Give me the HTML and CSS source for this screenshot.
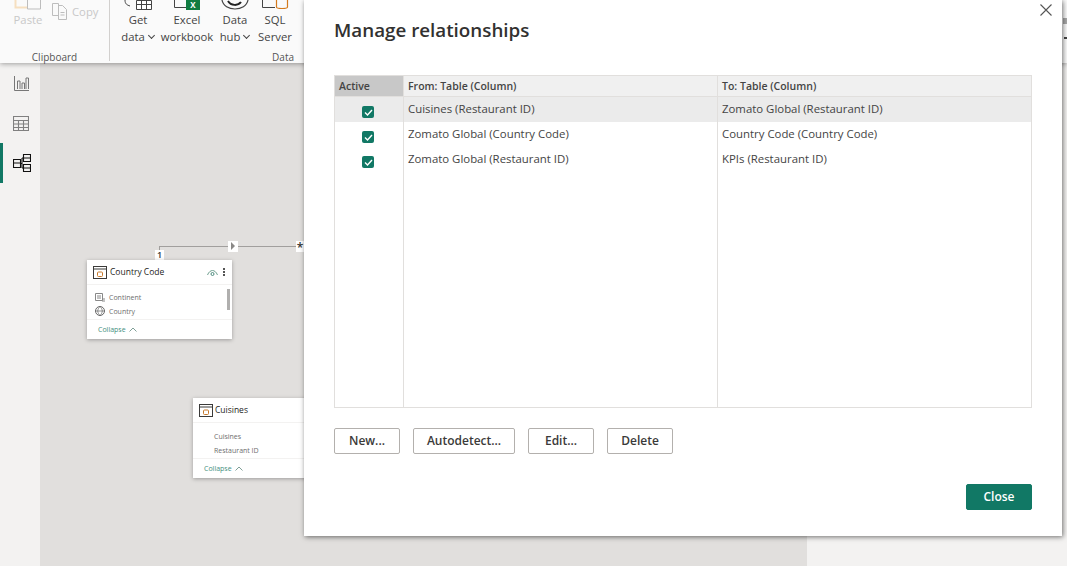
FILE: index.html
```html
<!DOCTYPE html>
<html lang="en">
<head>
    <meta charset="UTF-8">
    <title>Manage relationships</title>
    <link rel="stylesheet" href="styles.css">
</head>
<body>
    <div class="app">
        <div class="ribbon">
            <div class="rib-group clipboard">
                <div class="rib-row">
                    <div class="rib-btn paste disabled">
                        <svg class="rib-icon" width="38" height="10" viewBox="0 0 38 10"><path d="M6.500 0v7.500H19" fill="none" stroke="#f6dfc0" stroke-width="2"/><path d="M18.500 -1h13v10h-13z" fill="none" stroke="#bdbdbd"/></svg>
                        <span>Paste</span>
                    </div>
                    <div class="copy disabled">
                        <svg width="18" height="18" viewBox="0 0 18 18"><path d="M1.500 1.500h6v12h-6zM7.500 3.500h4l4 4v10h-8z" fill="#fafafa" stroke="#bdbdbd"/><path d="M9.500 10.500h4M9.500 13h4" stroke="#bdbdbd"/></svg>
                        <span>Copy</span>
                    </div>
                </div>
                <div class="group-label">Clipboard</div>
            </div>
            <div class="rib-group data">
                <div class="rib-row">
                    <div class="rib-btn get-data">
                        <svg class="rib-icon" width="28" height="10" viewBox="0 0 28 10"><path d="M1 0c0 4 2 5 5 6" fill="none" stroke="#444"/><path d="M12.500 0.500h15v9h-15zM12.500 4.500h15M17.500 0v10M22.500 0v10" fill="#fff" stroke="#444"/></svg>
                        <span>Get</span>
                        <span>data <i class="chev"></i></span>
                    </div>
                    <div class="rib-btn excel">
                        <svg class="rib-icon" width="28" height="10" viewBox="0 0 28 10"><path d="M1.500 0v7.500H13" fill="none" stroke="#444"/><rect x="13" y="0" width="14" height="10" fill="#107c41"/><text class="excel-x" x="20" y="8" text-anchor="middle">X</text></svg>
                        <span>Excel</span>
                        <span>workbook</span>
                    </div>
                    <div class="rib-btn hub">
                        <svg class="rib-icon" width="28" height="10" viewBox="0 0 28 10"><path d="M1 0c2 12 24 12 26 0" fill="none" stroke="#444" stroke-width="1.200"/><path d="M7 1c3 5 10 5 13 1" fill="none" stroke="#222" stroke-width="2"/></svg>
                        <span>Data</span>
                        <span>hub <i class="chev"></i></span>
                    </div>
                    <div class="rib-btn sql">
                        <svg class="rib-icon" width="28" height="10" viewBox="0 0 28 10"><path d="M1.500 0v7.500H14" fill="none" stroke="#444"/><path d="M15.500 0v7c0 2 11 2 11 0V0" fill="none" stroke="#d47a1d" stroke-width="1.200"/></svg>
                        <span>SQL</span>
                        <span>Server</span>
                    </div>
                </div>
                <div class="group-label">Data</div>
            </div>
            <div class="rib-sliver">
                <i class="sliver-mark"></i>
                <i class="sliver-chev"></i>
            </div>
        </div>

        <div class="main">
            <div class="sidebar">
                <div class="nav-item">
                    <svg width="15" height="15" viewBox="0 0 15 15"><path d="M.5 0v14.500H15M3.500 13V5H6v8M8 13V7h2.500v6M12 13V2h2.500v11" fill="none" stroke="#777"/></svg>
                </div>
                <div class="nav-item">
                    <svg width="16" height="15" viewBox="0 0 16 15"><path d="M.5.500h15v14H.5zM.5 4.500h15M.5 8h15M.5 11.500h15M5.500 4.500v10M10.500 4.500v10" fill="none" stroke="#808080" stroke-width="1.100"/></svg>
                </div>
                <div class="nav-item active">
                    <svg width="18" height="18" viewBox="0 0 18 18"><path d="M.5 5.500h7v8h-7zM.5 9h7M10.500.5h7v7h-7zM10.500 4h7M10.500 10.500h7v7h-7zM10.500 14h7M7.500 9.500H9M9 4v10M9 4h1.500M9 14h1.500" fill="none" stroke="#111" stroke-width="1.100"/></svg>
                </div>
            </div>

            <div class="canvas">
                <div class="link-line"></div>
                <div class="link-drop"></div>
                <div class="link-tag one">1</div>
                <div class="link-arrow"><i></i></div>
                <div class="link-tag star">*</div>

                <div class="node country">
                    <div class="node-head">
                        <svg class="tbl-icon" width="14" height="13" viewBox="0 0 14 13"><rect x=".5" y=".5" width="13" height="12" fill="#fff" stroke="#3b3a39"/><path d="M0 3h14" stroke="#3b3a39"/><rect x="4.500" y="6" width="5" height="4.500" rx="1" fill="none" stroke="#c8792b"/></svg>
                        <span class="node-title">Country Code</span>
                        <svg class="eye" width="11" height="7" viewBox="0 0 11 7"><path d="M.5 6C3 0 8 0 10.500 6" fill="none" stroke="#6f9f8f"/><circle cx="5.500" cy="5" r="1.500" fill="none" stroke="#4d8b7e"/></svg>
                        <span class="dots"><i></i><i></i><i></i></span>
                    </div>
                    <div class="node-fields">
                        <div class="field">
                            <svg width="10" height="9" viewBox="0 0 10 9"><path d="M.5.500h7v7h-7zM2 3h4M2 5h4M7 6h3M7 8h3" fill="none" stroke="#888"/></svg>
                            <span>Continent</span>
                        </div>
                        <div class="field">
                            <svg width="10" height="10" viewBox="0 0 10 10"><circle cx="5" cy="5" r="4.500" fill="none" stroke="#666"/><path d="M.5 5h9M5 .5c-3 3-3 6 0 9M5 .5c3 3 3 6 0 9" fill="none" stroke="#666" stroke-width=".7"/></svg>
                            <span>Country</span>
                        </div>
                        <div class="scrollbar"></div>
                    </div>
                    <div class="node-foot">Collapse <svg width="8" height="5" viewBox="0 0 8 5"><path d="M.5 4.500 4 1l3.500 3.500" fill="none" stroke="#7f9f97"/></svg></div>
                </div>

                <div class="node cuisines">
                    <div class="node-head">
                        <svg class="tbl-icon" width="14" height="13" viewBox="0 0 14 13"><rect x=".5" y=".5" width="13" height="12" fill="#fff" stroke="#3b3a39"/><path d="M0 3h14" stroke="#3b3a39"/><rect x="4.500" y="6" width="5" height="4.500" rx="1" fill="none" stroke="#c8792b"/></svg>
                        <span class="node-title">Cuisines</span>
                    </div>
                    <div class="node-fields">
                        <div class="field plain"><span>Cuisines</span></div>
                        <div class="field plain"><span>Restaurant ID</span></div>
                    </div>
                    <div class="node-foot">Collapse <svg width="8" height="5" viewBox="0 0 8 5"><path d="M.5 4.500 4 1l3.500 3.500" fill="none" stroke="#7f9f97"/></svg></div>
                </div>
            </div>

            <div class="right-panel"></div>
        </div>

        <div class="dialog">
            <svg class="dialog-x" width="12" height="12" viewBox="0 0 12 12"><path d="M.5.500l11 11M11.500.500l-11 11" stroke="#555" stroke-width="1.100"/></svg>
            <h1>Manage relationships</h1>
            <div class="rel-table">
                <div class="rel-row head">
                    <div class="cell active-col">Active</div>
                    <div class="cell">From: Table (Column)</div>
                    <div class="cell">To: Table (Column)</div>
                </div>
                <div class="rel-row selected">
                    <div class="cell check-col"><span class="check"><svg width="9" height="7" viewBox="0 0 9 7"><path d="M1 3.500 3.500 6 8 1" fill="none" stroke="#fff" stroke-width="1.400"/></svg></span></div>
                    <div class="cell">Cuisines (Restaurant ID)</div>
                    <div class="cell">Zomato Global (Restaurant ID)</div>
                </div>
                <div class="rel-row">
                    <div class="cell check-col"><span class="check"><svg width="9" height="7" viewBox="0 0 9 7"><path d="M1 3.500 3.500 6 8 1" fill="none" stroke="#fff" stroke-width="1.400"/></svg></span></div>
                    <div class="cell">Zomato Global (Country Code)</div>
                    <div class="cell">Country Code (Country Code)</div>
                </div>
                <div class="rel-row">
                    <div class="cell check-col"><span class="check"><svg width="9" height="7" viewBox="0 0 9 7"><path d="M1 3.500 3.500 6 8 1" fill="none" stroke="#fff" stroke-width="1.400"/></svg></span></div>
                    <div class="cell">Zomato Global (Restaurant ID)</div>
                    <div class="cell">KPIs (Restaurant ID)</div>
                </div>
                <div class="rel-row filler">
                    <div class="cell"></div>
                    <div class="cell"></div>
                    <div class="cell"></div>
                </div>
            </div>
            <div class="actions">
                <button class="btn w66">New...</button>
                <button class="btn w102">Autodetect...</button>
                <button class="btn w66">Edit...</button>
                <button class="btn w66">Delete</button>
            </div>
            <div class="dialog-foot">
                <button class="btn primary">Close</button>
            </div>
        </div>
    </div>
</body>
</html>
```

FILE: styles.css
```css
html, body {
    margin: 0;
    padding: 0;
}

body {
    font-family: "Open Sans", "Noto Sans", Arial, sans-serif;
    background-color: #f3f2f1;
    color: #252423;
}

.app {
    position: relative;
    width: 1067px;
    height: 566px;
    overflow: hidden;
    display: flex;
    flex-direction: column;
}

/* ribbon */
.ribbon {
    height: 63px;
    display: flex;
    background-color: #fafafa;
    box-shadow: 0 1px 5px rgba(0, 0, 0, 0.35);
    position: relative;
    z-index: 2;
    font-size: 11.300px;
    color: #444;
    flex-shrink: 0;
}

.rib-group {
    display: flex;
    flex-direction: column;
    border-right: 1px solid #d2d0ce;
    margin-bottom: 2px;
}

.clipboard {
    width: 109px;
}

.data {
    width: 194px;
    border-right: none;
}

.rib-row {
    flex: 1;
    display: flex;
}

.group-label {
    text-align: right;
    font-size: 10px;
    line-height: 14px;
    height: 11px;
    color: #555;
}

.clipboard .group-label {
    text-align: center;
}

.data .group-label {
    padding-right: 10px;
}

.rib-btn {
    display: flex;
    flex-direction: column;
    align-items: center;
    line-height: 17px;
    white-space: nowrap;
}

.rib-icon {
    display: block;
    margin-bottom: 1px;
}

.excel-x {
    font-size: 8px;
    font-weight: 700;
    fill: #fff;
}

.paste {
    width: 46px;
    padding-left: 5px;
}

.disabled {
    color: #c8c8c8;
}

.copy {
    display: flex;
    align-items: center;
    gap: 3px;
    height: 20px;
    margin-top: 1px;
}

.get-data {
    width: 48px;
    margin-left: 4px;
}

.excel {
    width: 50px;
}

.hub {
    width: 46px;
}

.sql {
    width: 34px;
}

.chev {
    display: inline-block;
    width: 4px;
    height: 4px;
    border-right: 1px solid #444;
    border-bottom: 1px solid #444;
    transform: rotate(45deg);
    margin: 0 1px 3px 1px;
}

.rib-sliver {
    flex: 1;
    display: flex;
    flex-direction: column;
    align-items: flex-end;
    gap: 13px;
    padding-top: 18px;
}

.sliver-mark {
    width: 4px;
    height: 6px;
    background-color: #a8a8a8;
}

.sliver-chev {
    width: 3px;
    height: 2px;
    background-color: #444;
}

/* page under the ribbon */
.main {
    flex: 1;
    display: flex;
}

.sidebar {
    width: 40px;
    background-color: #f3f2f1;
}

.nav-item {
    height: 40px;
    display: flex;
    align-items: center;
    justify-content: center;
    padding-left: 2px;
    box-sizing: border-box;
}

.nav-item.active {
    border-left: 3px solid #117865;
    padding-left: 0;
}

.canvas {
    position: relative;
    flex: 1;
    background-color: #e1dfdd;
}

.right-panel {
    width: 260px;
    background-color: #f3f2f1;
}

/* model diagram */
.link-line {
    position: absolute;
    left: 119px;
    top: 183px;
    width: 141px;
    height: 1px;
    background-color: #a19f9d;
}

.link-drop {
    position: absolute;
    left: 119px;
    top: 183px;
    width: 1px;
    height: 5px;
    background-color: #a19f9d;
}

.link-tag {
    position: absolute;
    background-color: #fff;
    font-size: 9px;
    font-weight: 600;
    line-height: 10px;
    text-align: center;
    color: #333;
}

.link-tag.one {
    left: 115px;
    top: 187px;
    width: 9px;
    height: 10px;
}

.link-tag.star {
    left: 256px;
    top: 178px;
    width: 8px;
    height: 11px;
    font-size: 12px;
    line-height: 13px;
}

.link-arrow {
    position: absolute;
    left: 188px;
    top: 178px;
    width: 10px;
    height: 11px;
    background-color: #fff;
}

.link-arrow i {
    position: absolute;
    left: 3px;
    top: 1px;
    border-left: 4px solid #8a8886;
    border-top: 4px solid transparent;
    border-bottom: 4px solid transparent;
}

.node {
    position: absolute;
    width: 145px;
    height: 79px;
    background-color: #fff;
    box-shadow: 0 1px 4px rgba(0, 0, 0, 0.3);
    display: flex;
    flex-direction: column;
}

.node.country {
    left: 47px;
    top: 197px;
}

.node.cuisines {
    left: 153px;
    top: 335px;
    height: 80px;
    width: 140px;
}

.node-head {
    height: 24px;
    display: flex;
    align-items: center;
    padding: 0 6px;
    border-bottom: 1px solid #f3f2f1;
    flex-shrink: 0;
}

.tbl-icon {
    flex-shrink: 0;
    margin-right: -1px;
}

.node-title {
    font-size: 8.500px;
    line-height: 22px;
    color: #252423;
    margin-left: 3px;
    flex: 1;
    white-space: nowrap;
}

.country .node-title {
    margin-left: 4px;
}

.cuisines .node-title {
    line-height: 24px;
}

.eye {
    margin-right: 5px;
}

.dots {
    display: flex;
    flex-direction: column;
    gap: 1px;
    margin-right: 1px;
}

.dots i {
    width: 2px;
    height: 2px;
    background-color: #555;
}

.node-fields {
    position: relative;
    flex: 1;
    padding-top: 5px;
    border-bottom: 1px solid #f3f2f1;
}

.cuisines .node-fields {
    padding-top: 6px;
}

.field {
    height: 14px;
    display: flex;
    align-items: center;
    gap: 4px;
    padding-left: 8px;
    font-size: 7px;
    color: #6e6e6e;
}

.field.plain {
    padding-left: 21px;
}

.scrollbar {
    position: absolute;
    right: 2px;
    top: 4px;
    width: 3px;
    height: 21px;
    background-color: #b0afae;
}

.node-foot {
    height: 19px;
    padding-left: 11px;
    display: flex;
    align-items: center;
    gap: 3px;
    font-size: 7px;
    color: #3f9080;
    flex-shrink: 0;
}

/* dialog */
.dialog {
    position: absolute;
    left: 304px;
    top: 0;
    width: 758px;
    height: 536px;
    box-sizing: border-box;
    padding: 0 30px;
    background-color: #fff;
    box-shadow: 1px 1px 5px rgba(0, 0, 0, 0.55);
    z-index: 3;
    display: flex;
    flex-direction: column;
}

.dialog h1 {
    margin: 0;
    padding-top: 16px;
    height: 75px;
    box-sizing: border-box;
    font-size: 18.800px;
    line-height: 28px;
    font-weight: 600;
    color: #323130;
}

.dialog-x {
    position: absolute;
    right: 10px;
    top: 4px;
}

.rel-table {
    height: 333px;
    display: flex;
    flex-direction: column;
    border: 1px solid #e1dfdd;
    box-sizing: border-box;
    font-size: 11.400px;
    color: #444;
}

.rel-row {
    display: grid;
    grid-template-columns: 69px 314px 1fr;
    height: 25px;
    flex-shrink: 0;
}

.rel-row.head {
    height: 20px;
    background-color: #f0f0f0;
    font-size: 10.500px;
    font-weight: 600;
    border-bottom: 1px solid #e1dfdd;
}

.rel-row.selected {
    background-color: #ebebeb;
}

.rel-row.filler {
    flex: 1;
}

.cell {
    padding: 0 4px;
    line-height: 24px;
    border-right: 1px solid #e1dfdd;
}

.head .cell {
    line-height: 20px;
}

.cell:last-child {
    border-right: none;
}

.cell.active-col {
    background-color: #c8c8c8;
}

.cell.check-col {
    display: flex;
    justify-content: center;
    align-items: center;
    padding: 5px 2px 0 0;
}

.check {
    width: 12px;
    height: 12px;
    border-radius: 2px;
    background-color: #117865;
    display: flex;
    align-items: center;
    justify-content: center;
}

.actions {
    display: flex;
    gap: 13px;
    margin-top: 20px;
}

.btn {
    height: 26px;
    box-sizing: border-box;
    border: 1px solid #b3b0ad;
    border-radius: 2px;
    background-color: #fff;
    font-family: inherit;
    font-size: 12px;
    font-weight: 600;
    color: #3b3a39;
    padding: 0 0 2px;
}

.w66 {
    width: 66px;
}

.w102 {
    width: 102px;
}

.dialog-foot {
    display: flex;
    justify-content: flex-end;
    margin-top: 30px;
}

.btn.primary {
    width: 66px;
    background-color: #117865;
    border-color: #117865;
    color: #fff;
}
```
